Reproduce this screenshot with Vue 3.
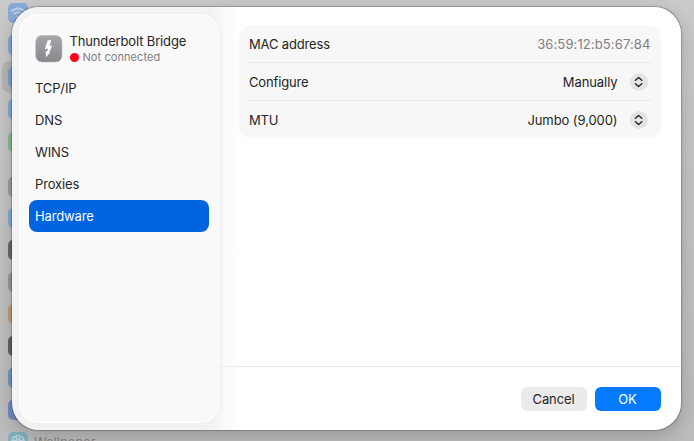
<script setup>
const backdropIcons = [
  { top: 3, color: '#88abd8' },
  { top: 35, color: '#86a9d6' },
  { top: 67, color: '#7d9fcd' },
  { top: 99, color: '#83a8d6' },
  { top: 132, color: '#8abb92' },
  { top: 177, color: '#9c9c9e' },
  { top: 208, color: '#82a7d5' },
  { top: 240, color: '#686868' },
  { top: 272, color: '#979799' },
  { top: 304, color: '#bf9f77' },
  { top: 336, color: '#626262' },
  { top: 368, color: '#7595c2' },
  { top: 400, color: '#718dbb' },
  { top: 432, color: '#82afbe' },
]
const tabs = ['TCP/IP', 'DNS', 'WINS', 'Proxies', 'Hardware']
const active = 'Hardware'
const rows = [
  { label: 'MAC address', value: '36:59:12:b5:67:84', menu: false },
  { label: 'Configure', value: 'Manually', menu: true },
  { label: 'MTU', value: 'Jumbo (9,000)', menu: true },
]
</script>

<template>
  <div class="desktop">
    <div class="backdrop-selection"></div>
    <i
      v-for="icon in backdropIcons"
      :key="icon.top"
      class="backdrop-icon"
      :style="{ top: icon.top + 'px', background: icon.color }"
    ></i>
    <svg class="backdrop-wifi" viewBox="0 0 20 20" width="20" height="20">
      <path d="M3 8.5Q10 2.5 17 8.5M5.5 11.3Q10 7.5 14.5 11.3" fill="none" stroke="#c3d1e3" stroke-width="1.8" />
      <path d="M7.8 13.3Q10 11.7 12.2 13.3L10 15.6Z" fill="#c3d1e3" />
    </svg>
    <svg class="backdrop-flower" viewBox="0 0 20 20" width="20" height="20">
      <g fill="none" stroke="#b9d2da" stroke-width="1.2">
        <circle cx="10" cy="5.3" r="2" />
        <circle cx="13.4" cy="6.7" r="2" />
        <circle cx="14.8" cy="10" r="2" />
        <circle cx="6.6" cy="6.7" r="2" />
        <circle cx="5.2" cy="10" r="2" />
        <circle cx="10" cy="10" r="2.2" />
      </g>
    </svg>
    <span class="backdrop-label">Wallpaper</span>

    <main class="dialog">
      <aside class="sidebar">
        <header class="service">
          <svg class="service-icon" viewBox="0 0 28 28" width="28" height="28">
            <defs>
              <linearGradient id="tile" x1="0" y1="0" x2="0" y2="1">
                <stop offset="0" stop-color="#a6a6aa" />
                <stop offset="1" stop-color="#87878c" />
              </linearGradient>
            </defs>
            <rect x="0.7" y="0.5" width="26.3" height="26.5" rx="6.3" fill="url(#tile)" stroke="#bcbcc0" stroke-width="0.7" />
            <path d="M12.6 5.5L16.4 4.7L14.6 10.9L17.3 10.4L14.2 17.4L15.6 17L11 22.2L10.6 16.2L11.9 17.1L13.1 13.5L9.8 14.2Z" fill="#fff" />
          </svg>
          <div class="service-text">
            <div class="service-name">Thunderbolt Bridge</div>
            <div class="service-status"><i class="dot"></i><span>Not connected</span></div>
          </div>
        </header>
        <nav class="tabs">
          <a v-for="tab in tabs" :key="tab" class="tab" :class="{ active: tab === active }">{{ tab }}</a>
        </nav>
      </aside>

      <section class="content">
        <div class="form">
          <div v-for="row in rows" :key="row.label" class="row">
            <span>{{ row.label }}</span>
            <span class="value" :class="{ readonly: !row.menu }">{{ row.value }}</span>
            <span v-if="row.menu" class="stepper">
              <svg viewBox="0 0 18 18" width="18" height="18">
                <path d="M5.4 7.2L8.6 4.5L11.8 7.2M5.4 10.8L8.6 13.5L11.8 10.8" fill="none" stroke="#292929" stroke-width="1.5" stroke-linecap="round" stroke-linejoin="round" />
              </svg>
            </span>
          </div>
        </div>
        <footer class="actions">
          <button class="button">Cancel</button>
          <button class="button primary">OK</button>
        </footer>
      </section>
    </main>
  </div>
</template>

<style>
body {
  margin: 0;
  overflow: hidden;
}
</style>

<style scoped>
.desktop {
  position: relative;
  width: 694px;
  height: 441px;
  overflow: hidden;
  background: linear-gradient(180deg, #cacaca 0, #c3c3c3 50%, #bcbcbc 100%);
  font-family: Inter, "Liberation Sans", sans-serif;
  font-size: 13px;
  letter-spacing: -0.15px;
  color: #262626;
}
.backdrop-icon {
  position: absolute;
  left: 8px;
  width: 20px;
  height: 20px;
  border-radius: 5px;
}
.backdrop-selection {
  position: absolute;
  left: 2px;
  top: 61px;
  width: 205px;
  height: 32px;
  border-radius: 8px;
  background: #b5b5b5;
}
.backdrop-wifi {
  position: absolute;
  left: 8px;
  top: 3px;
}
.backdrop-flower {
  position: absolute;
  left: 8px;
  top: 432px;
}
.backdrop-label {
  position: absolute;
  left: 34px;
  top: 434px;
  line-height: 16px;
  letter-spacing: 0;
  color: #858585;
}
.dialog {
  position: absolute;
  left: 12px;
  top: 6.5px;
  width: 668.5px;
  height: 423.5px;
  box-sizing: border-box;
  display: flex;
  padding: 7.5px 0 7px 7px;
  border-radius: 27px;
  background: linear-gradient(90deg, #f3f3f3 0, #f3f3f3 200px, #fafafa 214px, #fff 232px);
  box-shadow: 0 0 1px 0.5px rgba(0, 0, 0, 0.22), 0 6px 20px rgba(0, 0, 0, 0.2);
}
.sidebar {
  width: 200px;
  flex: none;
  box-sizing: border-box;
  padding: 20px 10px;
  border-radius: 19px;
  background: #f9f9f9;
  box-shadow: inset 0 0 0 1px #fefefe, 0 0 8px rgba(0, 0, 0, 0.025);
}
.service {
  display: flex;
  height: 37.5px;
  padding-left: 6px;
}
.service-icon {
  margin-top: 1px;
  flex: none;
}
.service-text {
  margin: -1px 0 0 6.5px;
}
.service-name {
  line-height: 16px;
  white-space: nowrap;
}
.service-status {
  display: flex;
  align-items: center;
  gap: 4px;
  line-height: 16px;
  font-size: 11px;
  letter-spacing: 0.08px;
  color: #808080;
}
.dot {
  width: 9px;
  height: 9px;
  border-radius: 50%;
  background: #ff0019;
}
.tabs {
  display: flex;
  flex-direction: column;
}
.tab {
  height: 32px;
  line-height: 33px;
  padding-left: 6px;
  border-radius: 8px;
}
.tab.active {
  background: #0064e1;
  color: #fff;
}
.content {
  flex: 1;
  display: flex;
  flex-direction: column;
  justify-content: space-between;
}
.form {
  margin: 12px 20px 0;
  padding: 0 10px;
  border-radius: 12px;
  background: #f7f7f7;
}
.row {
  display: flex;
  align-items: center;
  height: 37px;
  border-top: 1px solid #e9e9e9;
}
.row:first-child {
  height: 36px;
  border-top: 0;
}
.value {
  margin-left: auto;
  letter-spacing: -0.08px;
}
.readonly {
  color: #808080;
  letter-spacing: 0.12px;
}
.stepper {
  width: 18px;
  height: 18px;
  margin: 0 3px 0 12px;
  border-radius: 50%;
  background: #e4e4e4;
}
.stepper svg {
  display: block;
}
.actions {
  display: flex;
  justify-content: flex-end;
  gap: 8px;
  height: 57px;
  box-sizing: border-box;
  padding: 20px 20px 0;
  border-top: 1px solid #ececec;
}
.button {
  width: 66px;
  height: 24px;
  padding: 0;
  border: 0;
  border-radius: 6px;
  background: #ebebeb;
  color: #262626;
  font: inherit;
  letter-spacing: -0.1px;
}
.button.primary {
  background: #047aff;
  color: #fff;
}
</style>
